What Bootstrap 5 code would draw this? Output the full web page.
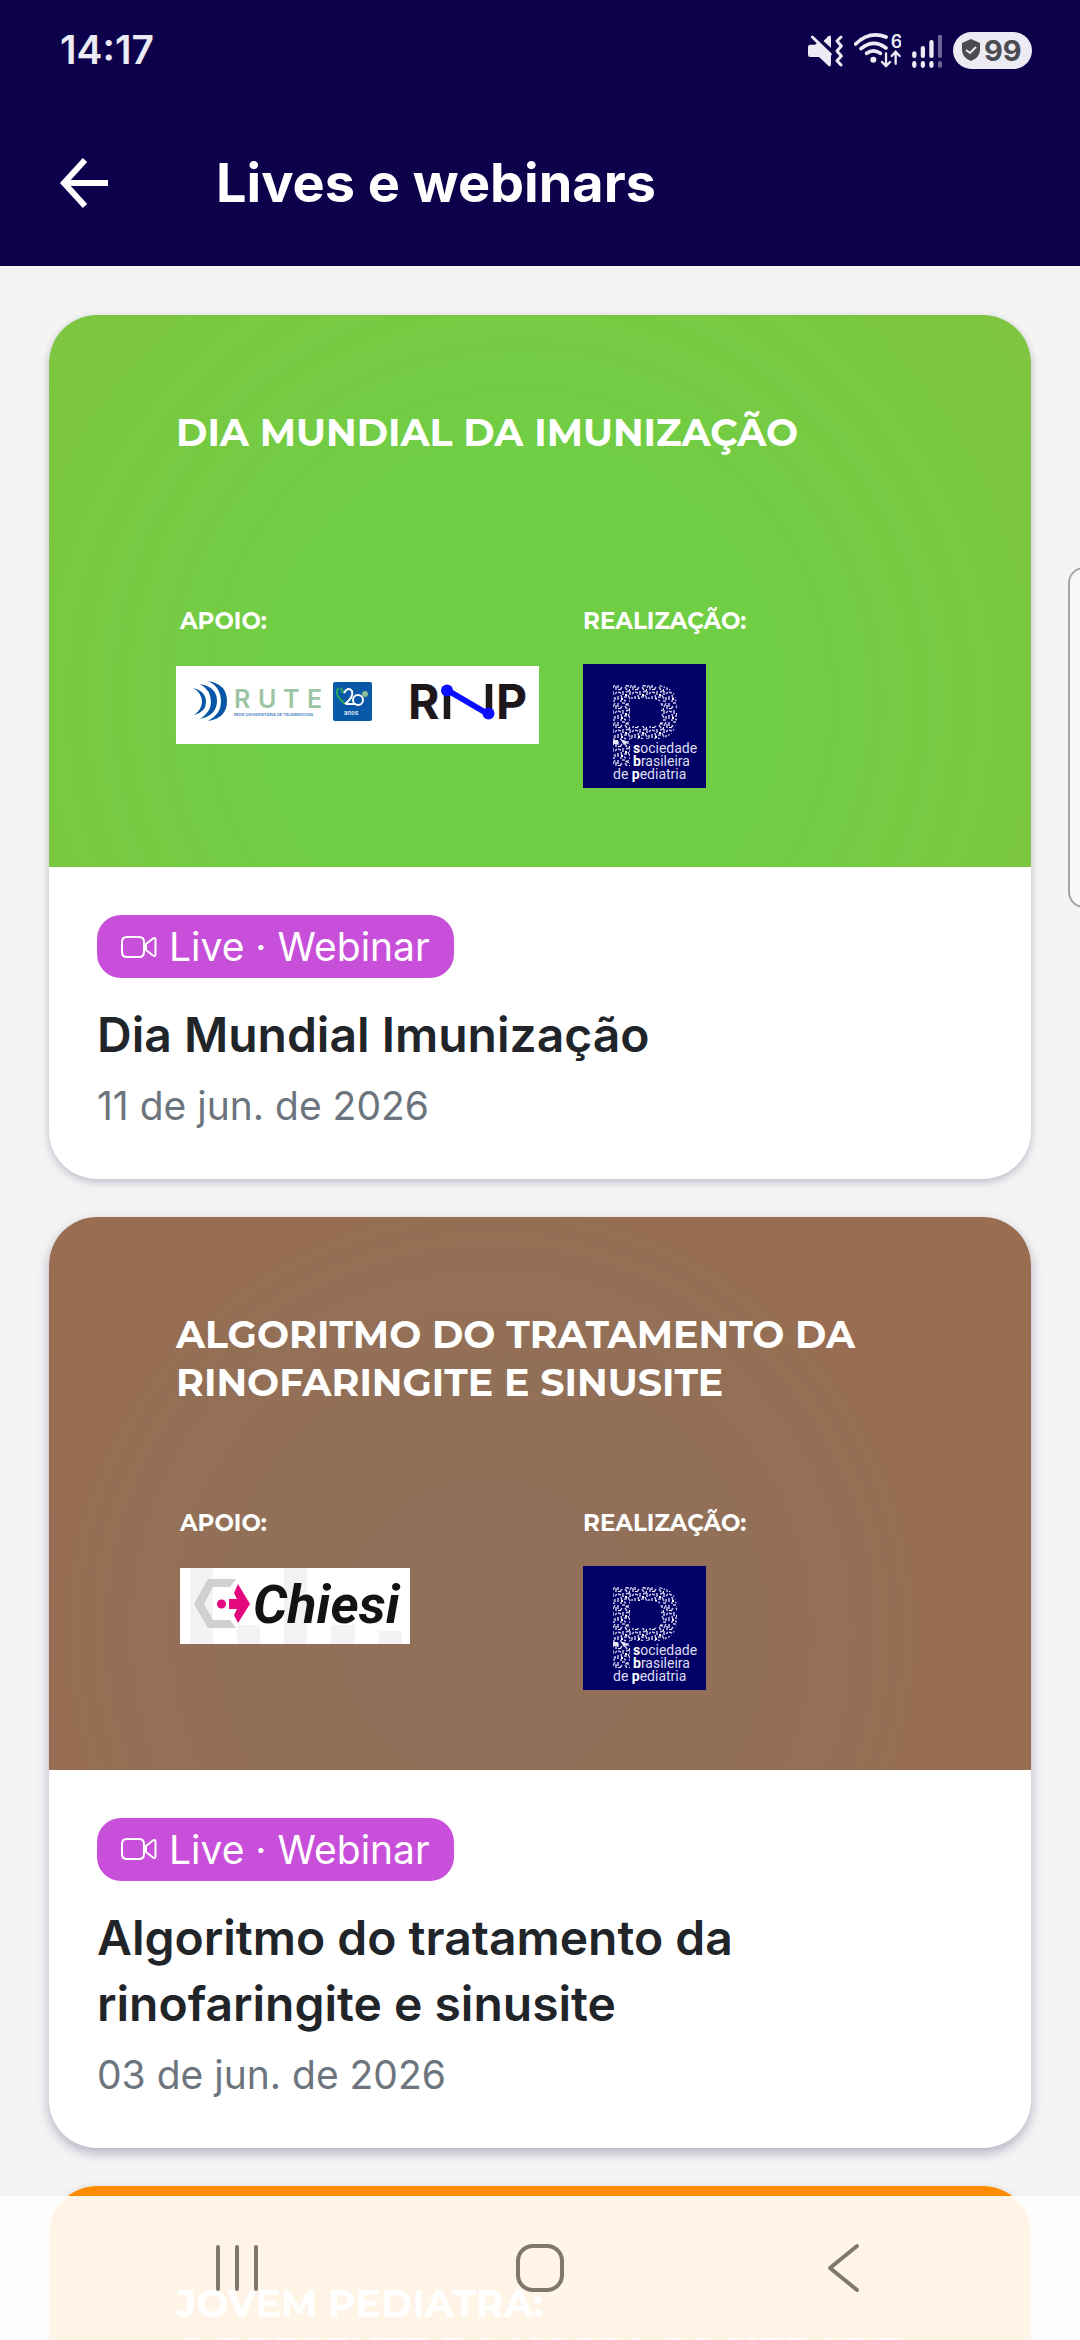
<!DOCTYPE html>
<html lang="pt-BR">
<head>
<meta charset="utf-8">
<meta name="viewport" content="width=device-width, initial-scale=1">
<title>Lives e webinars</title>
<link href="https://cdn.jsdelivr.net/npm/bootstrap@5.3.0/dist/css/bootstrap.min.css" rel="stylesheet">
<style>
  :root { --navy: #0d014b; --soft: #ecebf3; }
  body { font-family: Inter, Roboto, "Liberation Sans", sans-serif; background: #f4f4f4; color: #212529; }
  svg { display: block; flex: none; }
  .app-head { background: var(--navy); }
  .status-row { height: 100px; padding: 0 48px 0 60px; color: var(--soft); font-size: 39px; font-weight: 600; }
  .status-icons { gap: 11px; }
  .battery-pill { height: 37px; width: 79px; background: var(--soft); color: #4b4b52; font-size: 29px; font-weight: 700; line-height: 37px; gap: 3px; padding-left: 8px; }
  .title-row { height: 166px; padding: 0 56px; gap: 104px; }
  .title-row h1 { font-size: 54px; font-weight: 700; line-height: 72px; }
  .back-link { padding: 0; }
  .feed { padding: 49px; gap: 38px; scrollbar-width: none; }
  .feed::-webkit-scrollbar { display: none; }
  .live-card { border: 0; border-radius: 48px; flex: none; box-shadow: 0 3px 9px rgba(13, 1, 75, .24); }
  .live-card:nth-child(2) { box-shadow: 0 5px 12px rgba(13, 1, 75, .28); }
  .live-banner { aspect-ratio: 16 / 9; border-radius: 48px 48px 0 0; padding: 94px 100px 0 127px; color: #fff; font-family: Montserrat, Inter, sans-serif; }
  .banner-green { background: radial-gradient(circle at 48% 70%, #6fce45 0, #70ce44 40%, #79c942 72%, #80c441 100%); }
  .banner-brown { background: radial-gradient(circle at 45% 75%, #926f5a 0, #926f56 44%, #937055 56%, #986d53 66%, #9a6d50 100%); }
  .banner-orange { background: #ff8c00; }
  .banner-title { font-size: 38px; font-weight: 700; line-height: 48px; height: 194px; margin: 0; white-space: nowrap; }
  .banner-label { font-size: 23px; font-weight: 700; line-height: 36px; margin-bottom: 25px; padding-left: 4px; }
  .support-col { flex: 0 0 407px; }
  .support-col .banner-label { margin-bottom: 27px; }
  .host-col .banner-label { padding-left: 0; }
  .live-body { padding: 48px; }
  .live-tag { height: 63px; border-radius: 24px; background: #c84fd9; color: #fff; font-size: 39px; line-height: 51px; padding: 6px 24px; gap: 12px; margin-bottom: 24px; }
  .live-title { font-size: 48px; font-weight: 600; line-height: 66px; margin: 0 0 12px; max-width: 800px; }
  .live-date { font-size: 39px; line-height: 51px; color: #6c757d; margin: 0; }
  .edge-handle { position: fixed; right: -20px; top: 567px; width: 32px; height: 341px; border: 2px solid #a5a5a5; border-radius: 16px; background: #f8f8f8; }
  .sys-nav { height: 144px; background: rgba(255, 255, 255, .9); padding: 0 86px; }
  .sys-nav button { flex: 1; height: 144px; }
</style>
</head>
<body>
<svg width="0" height="0" class="position-absolute" aria-hidden="true">
  <defs>
    <pattern id="speckle" width="17" height="19" patternUnits="userSpaceOnUse">
      <path d="M1 1v4M3 7l2-3M5 1h3M8 4l2 3M11 1v3M13 5l2-4M16 3v4M1 9l3 1M6 8v4M9 9l3-1M13 8v4M15 11l2-2M1 13v4M4 12l1 4M7 14h3M11 12l2 4M15 14v3M7 17l2 1M3 18h2M12 18l3 0" stroke="#c5c3e2" stroke-width="1.5" fill="none"/>
      <path d="M9 2l1 1M2 6v1M12 7h1M8 12h2M5 15v2" stroke="#fff" stroke-width="2"/>
    </pattern>
    <symbol id="sbp" viewBox="0 0 123 124">
      <rect width="123" height="124" fill="#000066"/>
      <path d="M30 21H72Q94 21 94 43V53Q94 75 73 75H47V102H30ZM47 35V62H70Q78 62 78 54V43Q78 35 70 35Z" fill="url(#speckle)" fill-rule="evenodd"/>
      <path d="M30 76h5v4h-5zM37 75l8 3-4 3z" fill="#e8e8f5"/>
      <g fill="#dddcf0" font-family="Roboto, sans-serif" font-size="14">
        <text x="50" y="89"><tspan font-weight="700" fill="#fff">s</tspan>ociedade</text>
        <text x="50" y="102"><tspan font-weight="700" fill="#fff">b</tspan>rasileira</text>
        <text x="30" y="115">de <tspan font-weight="700" fill="#fff">p</tspan>ediatria</text>
      </g>
    </symbol>
    <symbol id="cam" viewBox="0 0 36 24">
      <path d="M6 2H18Q23 2 23 7V17Q23 22 18 22H6Q1 22 1 17V7Q1 2 6 2ZM25 9L32 3.500Q34.500 2 34.500 5V19Q34.500 22 32 20.500L25 15Z" fill="none" stroke="#fff" stroke-width="2" stroke-linejoin="round"/>
    </symbol>
  </defs>
</svg>

<div class="d-flex flex-column vh-100 overflow-hidden">
  <header class="app-head flex-shrink-0">
    <div class="status-row d-flex align-items-center justify-content-between">
      <span>14:17</span>
      <div class="status-icons d-flex align-items-center">
        <svg width="35" height="37" viewBox="81 63 105 111" fill="#ecebf3"><path d="M88 101H102L112 93L150 127V160Q150 170 142 164L114 138H88Q81 138 81 131V108Q81 101 88 101Z"/><path d="M125 92L142 76Q150 70 150 79V114Z"/><path d="M100 72L152 119" stroke="#0d014b" stroke-width="10"/><path d="M94 78L148 130" stroke="#ecebf3" stroke-width="9" stroke-linecap="round"/><path d="M180 78L168 90L181 105L168 120L181 135L168 149L180 162" fill="none" stroke="#ecebf3" stroke-width="9" stroke-linejoin="round" stroke-linecap="round"/></svg>
        <svg width="47" height="37" viewBox="218 63 141 111" fill="none" stroke="#ecebf3" stroke-width="11" stroke-linecap="round"><path d="M223 99Q264 59 314 78M239 113Q276 82 314 111M256 127Q276 112 297 127"/><circle cx="276" cy="146" r="9" fill="#ecebf3" stroke="none"/><path d="M314 127V164M302 153L314 165L326 153M343 158V124M331 135L343 122L355 135" stroke-width="7"/><text x="328" y="110" font-family="Inter, sans-serif" font-size="54" font-weight="600" fill="#ecebf3" stroke="none">6</text></svg>
        <svg width="30" height="37" viewBox="392 63 91 111" stroke="#ecebf3" stroke-width="13" stroke-linecap="round"><path d="M399 127V135M425 111V135M451 93V135M399 157V165M425 157V165M451 157V165"/><path d="M477 77V135M477 157V165" stroke="#6b6494"/></svg>
        <div class="battery-pill d-flex align-items-center rounded-pill">
          <svg width="20" height="23" viewBox="0 0 20 23"><path d="M10 0L19 4V12Q18 19 10 22Q2 19 1 12V4Z" fill="#4b4b52"/><path d="M5 11L9 14L15 8" fill="none" stroke="#ecebf3" stroke-width="2"/></svg>
          <span>99</span>
        </div>
      </div>
    </div>
    <div class="title-row d-flex align-items-center">
      <a href="#" class="back-link" aria-label="Voltar"><svg width="56" height="56" viewBox="0 0 56 56"><path d="M52 28H8M29 5L8 28L29 51" fill="none" stroke="#fff" stroke-width="6"/></svg></a>
      <h1 class="text-white m-0">Lives e webinars</h1>
    </div>
  </header>

  <main class="feed d-flex flex-column flex-grow-1 overflow-auto">
    <article class="card live-card">
      <div class="live-banner banner-green">
        <p class="banner-title">DIA MUNDIAL DA IMUNIZAÇÃO</p>
        <div class="d-flex">
          <div class="support-col">
            <p class="banner-label">APOIO:</p>
            <svg width="363" height="78" viewBox="0 0 363 78" role="img" aria-label="RUTE e RNP">
              <rect width="363" height="78" fill="#fff"/>
              <g fill="#0757a6"><path d="M17 22Q30 25 30 36Q30 46 18 49Q26 43 26 36Q26 27 17 22Z"/><path d="M24 18Q41 21 41 35Q41 49 24 53Q35 46 35 36Q35 24 24 18Z"/><path d="M32 15Q51 18 51 35Q51 52 32 55Q45 48 45 36Q45 21 32 15Z"/></g>
              <text x="58 82 107 131" y="42" font-family="Inter, sans-serif" font-size="25" font-weight="600" fill="#9dc5a4">RUTE</text>
              <text x="58" y="50" font-family="Inter, sans-serif" font-size="4" font-weight="600" fill="#4a83bd">REDE UNIVERSITÁRIA DE TELEMEDICINA</text>
              <rect x="157" y="16" width="39" height="39" rx="2" fill="#0a58a8"/>
              <path d="M162 22Q159 28 164 33L169 38M164 22Q167 24 167 27" fill="none" stroke="#2ba65b" stroke-width="2"/>
              <path d="M169 38Q178 31 176 25Q172 20 168 27M170 38H180" fill="none" stroke="#fff" stroke-width="2"/>
              <circle cx="182" cy="34" r="5" fill="none" stroke="#fff" stroke-width="2"/><circle cx="189" cy="28" r="3" fill="#8dbb96"/>
              <text x="168" y="49" font-family="Inter, sans-serif" font-size="6" font-weight="700" fill="#d5e2f0">anos</text>
              <g font-family="Inter, sans-serif" font-size="48" font-weight="700" fill="#1d161a"><text x="232" y="53">R</text><text x="320" y="53">P</text></g>
              <path d="M271 24V53M313 18V48" stroke="#1d161a" stroke-width="6.500"/>
              <path d="M271 24L312 48" stroke="#0a10ff" stroke-width="6"/><circle cx="271" cy="24.500" r="6" fill="#0a10ff"/><circle cx="312.500" cy="47.500" r="6" fill="#0a10ff"/>
            </svg>
          </div>
          <div class="host-col">
            <p class="banner-label">REALIZAÇÃO:</p>
            <svg width="123" height="124" role="img" aria-label="Sociedade Brasileira de Pediatria"><use href="#sbp"/></svg>
          </div>
        </div>
      </div>
      <div class="live-body">
        <div class="live-tag d-inline-flex align-items-center"><svg width="36" height="24"><use href="#cam"/></svg><span>Live · Webinar</span></div>
        <h2 class="live-title">Dia Mundial Imunização</h2>
        <p class="live-date">11 de jun. de 2026</p>
      </div>
    </article>

    <article class="card live-card">
      <div class="live-banner banner-brown">
        <p class="banner-title">ALGORITMO DO TRATAMENTO DA<br>RINOFARINGITE E SINUSITE</p>
        <div class="d-flex">
          <div class="support-col">
            <p class="banner-label">APOIO:</p>
            <svg width="236" height="76" viewBox="-4 0 236 76" role="img" aria-label="Chiesi">
              <rect width="230" height="76" fill="#fff"/>
              <path d="M10 0H33V76H10ZM57 57H80V76H57ZM104 0H127V76H104ZM151 57H175V76H151ZM199 63H222V76H199Z" fill="#f3f3f4"/>
              <path d="M56 11H28L14 36L28 60H56L50 52H33L24 36L33 19H50Z" fill="#d0cfd1"/>
              <circle cx="41.500" cy="36" r="4.500" fill="#e5087e"/><path d="M58 16L70 36L58 55L54 47L57 41H49V31H57L54 25Z" fill="#e5087e"/>
              <text x="73" y="55" font-family="Roboto, sans-serif" font-size="54" font-weight="700" font-style="italic" fill="#131311">Chiesi</text>
            </svg>
          </div>
          <div class="host-col">
            <p class="banner-label">REALIZAÇÃO:</p>
            <svg width="123" height="124" role="img" aria-label="Sociedade Brasileira de Pediatria"><use href="#sbp"/></svg>
          </div>
        </div>
      </div>
      <div class="live-body">
        <div class="live-tag d-inline-flex align-items-center"><svg width="36" height="24"><use href="#cam"/></svg><span>Live · Webinar</span></div>
        <h2 class="live-title">Algoritmo do tratamento da rinofaringite e sinusite</h2>
        <p class="live-date">03 de jun. de 2026</p>
      </div>
    </article>

    <article class="card live-card">
      <div class="live-banner banner-orange">
        <p class="banner-title">JOVEM PEDIATRA:<br>O PRESENTE DA NOSSA SOCIEDADE</p>
      </div>
    </article>
  </main>
</div>

<div class="edge-handle" aria-hidden="true"></div>

<nav class="sys-nav fixed-bottom d-flex align-items-center" aria-label="Sistema">
  <button type="button" class="btn border-0 p-0 d-flex align-items-center justify-content-center" aria-label="Recentes"><svg width="48" height="48" viewBox="0 0 48 48"><path d="M5 3V45M24 3V45M43 3V45" stroke="#7e786f" stroke-width="4" stroke-linecap="round"/></svg></button>
  <button type="button" class="btn border-0 p-0 d-flex align-items-center justify-content-center" aria-label="Início"><svg width="50" height="50" viewBox="0 0 50 50"><rect x="3" y="3" width="44" height="44" rx="15" fill="none" stroke="#7e786f" stroke-width="4"/></svg></button>
  <button type="button" class="btn border-0 p-0 d-flex align-items-center justify-content-center" aria-label="Voltar"><svg width="34" height="50" viewBox="0 0 34 50"><path d="M31 3L4 25L31 47" fill="none" stroke="#7e786f" stroke-width="4" stroke-linecap="round" stroke-linejoin="round"/></svg></button>
</nav>
<script src="https://cdn.jsdelivr.net/npm/bootstrap@5.3.0/dist/js/bootstrap.bundle.min.js"></script>
</body>
</html>
